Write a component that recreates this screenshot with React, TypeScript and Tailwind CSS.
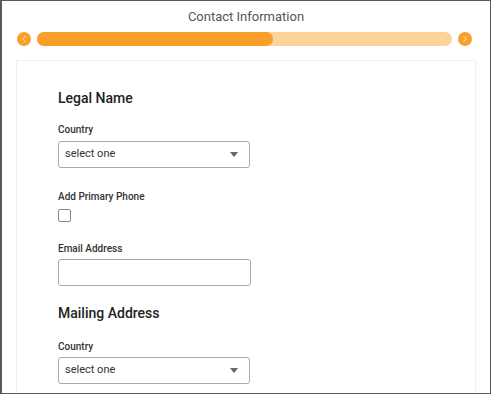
import { ChevronLeft, ChevronRight } from 'lucide-react';

function SelectBox() {
  return (
    <div className="flex h-[27px] w-[192px] items-center justify-between rounded-[3px] border border-[#a9a9a9] bg-white pl-[6px] pr-[11px]">
      <span className="text-[11px] text-[#333]">select one</span>
      <svg width="8" height="5" viewBox="0 0 8 5">
        <path d="M0 0h8L4 5z" fill="#666" />
      </svg>
    </div>
  );
}

function Label({ children }: { children: React.ReactNode }) {
  return <div className="text-[10px] font-medium leading-[14px] text-[#333]">{children}</div>;
}

export default function App() {
  return (
    <div
      className="flex h-[394px] w-[491px] flex-col overflow-hidden border border-l-2 border-[#595959] bg-white"
      style={{ fontFamily: 'Roboto, "Liberation Sans", sans-serif' }}
    >
      <div className="mt-[7px] text-center text-[13px] leading-[18px] text-[#555]">Contact Information</div>

      <div className="mt-[6px] flex items-center pl-[15px] pr-[18px]">
        <div className="flex h-[14px] w-[14px] items-center justify-center rounded-full bg-[#f9a02b]">
          <ChevronLeft size={10} strokeWidth={2.5} color="#fde4c4" />
        </div>
        <div className="mx-[6px] h-[14px] flex-1 rounded-full bg-[#fdd39c]">
          <div className="h-full w-[236px] rounded-full bg-[#f99f28]" />
        </div>
        <div className="flex h-[14px] w-[14px] items-center justify-center rounded-full bg-[#f9a02b]">
          <ChevronRight size={10} strokeWidth={2.5} color="#fde4c4" />
        </div>
      </div>

      <div className="mx-[14px] mt-[14px] flex-1 border border-b-0 border-[#f0f0f0] pl-[41px] pt-[27px]">
        <div className="text-[14px] font-medium leading-[20px] text-[#222]">Legal Name</div>
        <div className="mt-[15px]">
          <Label>Country</Label>
        </div>
        <div className="mt-[4px]">
          <SelectBox />
        </div>

        <div className="mt-[22px]">
          <Label>Add Primary Phone</Label>
        </div>
        <div className="mt-[5px] h-[13px] w-[13px] rounded-[2px] border border-[#8a8a8a] bg-white" />

        <div className="mt-[20px]">
          <Label>Email Address</Label>
        </div>
        <div className="mt-[3px] h-[27px] w-[193px] rounded-[3px] border border-[#a9a9a9] bg-white" />

        <div className="mt-[17px] text-[14px] font-medium leading-[20px] text-[#222]">Mailing Address</div>
        <div className="mt-[17px]">
          <Label>Country</Label>
        </div>
        <div className="mt-[3px]">
          <SelectBox />
        </div>
      </div>
    </div>
  );
}
